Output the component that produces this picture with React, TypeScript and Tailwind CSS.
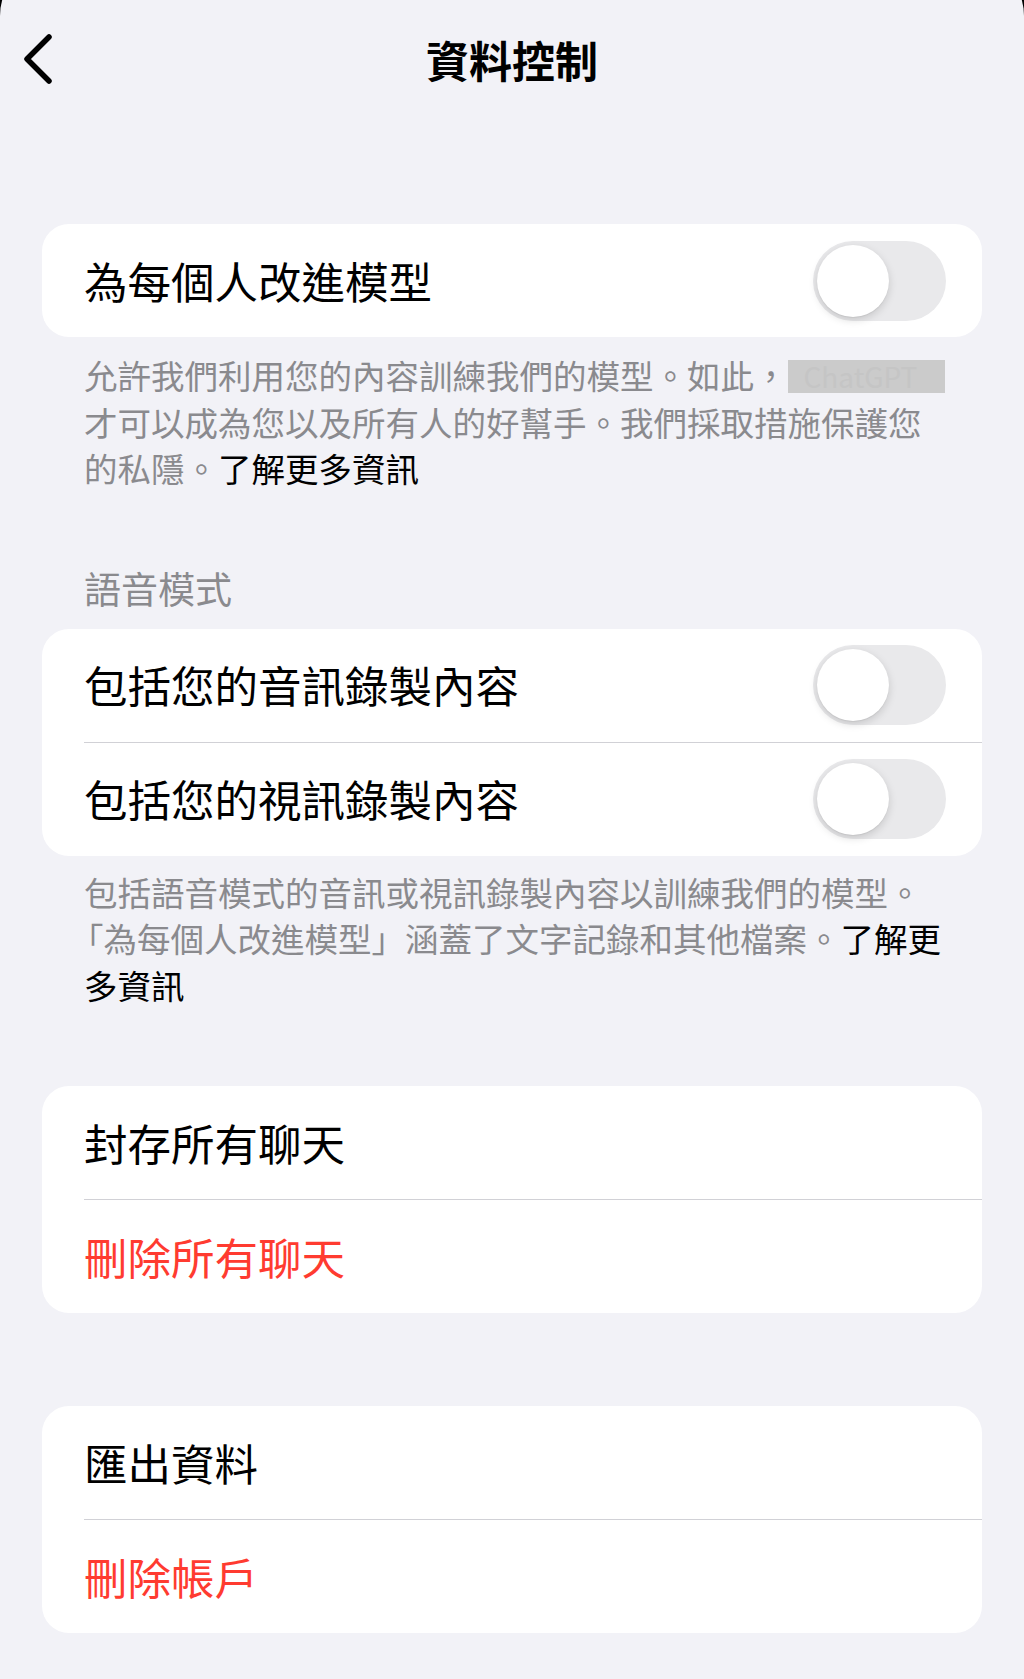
import React from 'react'

const font = { fontFamily: '"Noto Sans CJK TC", "Noto Sans", sans-serif' }

function Toggle() {
  return (
    <div className="flex items-center w-[133px] h-[80px] p-[4px] rounded-full bg-[#e9e9eb] shrink-0">
      <div className="w-[72px] h-[72px] rounded-full bg-white shadow-[0_3px_8px_rgba(0,0,0,0.15),0_1px_1px_rgba(0,0,0,0.06)]" />
    </div>
  )
}

function Row({ label, red, toggle }: { label: string; red?: boolean; toggle?: boolean }) {
  return (
    <div className="flex items-center justify-between h-[113px] pl-[42px] pr-[36px]">
      <span className={`text-[43.5px] leading-none ${red ? 'text-[#ff3b30]' : 'text-black'}`}>{label}</span>
      {toggle && <Toggle />}
    </div>
  )
}

function Divider() {
  return <div className="ml-[42px] h-px bg-[#d1d1d6]" />
}

function Card({ children, className = '' }: { children: React.ReactNode; className?: string }) {
  return <div className={`mx-[42px] bg-white rounded-[27px] overflow-hidden ${className}`}>{children}</div>
}

export default function App() {
  return (
    <div className="h-[1679px] overflow-hidden bg-black" style={font}>
      <div className="-mt-[44px] pt-[44px] h-[1723px] rounded-t-[60px] bg-[#f2f2f7]">
        {/* nav */}
        <div className="grid grid-cols-[1fr_auto_1fr] items-center h-[118px]">
          <div className="pl-[20px]">
            <svg width="36" height="56" viewBox="0 0 36 56" fill="none">
              <path d="M29 6 L7 28 L29 50" stroke="#000" strokeWidth="5.5" strokeLinecap="round" strokeLinejoin="round" />
            </svg>
          </div>
          <h1 className="text-[43px] font-bold leading-none text-black">資料控制</h1>
          <div />
        </div>

        <Card className="mt-[106px]">
          <Row label="為每個人改進模型" toggle />
        </Card>
        <p className="mt-[15px] px-[84px] text-[33.5px] leading-[46.5px] text-[#8a8a8e] whitespace-nowrap">
          允許我們利用您的內容訓練我們的模型。如此，
          <span className="inline-block align-middle w-[157px] h-[33px] -mt-[6px] bg-[#cbcbcb] text-[#c5c5c5] text-[28px] leading-[33px] pl-[16px]">ChatGPT</span>
          <br />
          才可以成為您以及所有人的好幫手。我們採取措施保護您
          <br />
          的私隱。<span className="text-black">了解更多資訊</span>
        </p>

        <div className="mt-[73px] px-[84px] text-[37px] leading-[46px] text-[#8a8a8e]">語音模式</div>
        <Card className="mt-[18px]">
          <Row label="包括您的音訊錄製內容" toggle />
          <Divider />
          <Row label="包括您的視訊錄製內容" toggle />
        </Card>
        <p className="mt-[13px] px-[84px] text-[33.5px] leading-[46.5px] text-[#8a8a8e] whitespace-nowrap">
          包括語音模式的音訊或視訊錄製內容以訓練我們的模型。
          <br />
          <span className="-ml-[14px]">「</span>為每個人改進模型」涵蓋了文字記錄和其他檔案。<span className="text-black">了解更</span>
          <br />
          <span className="text-black">多資訊</span>
        </p>

        <Card className="mt-[78px]">
          <Row label="封存所有聊天" />
          <Divider />
          <Row label="刪除所有聊天" red />
        </Card>

        <Card className="mt-[93px]">
          <Row label="匯出資料" />
          <Divider />
          <Row label="刪除帳戶" red />
        </Card>
      </div>
    </div>
  )
}
